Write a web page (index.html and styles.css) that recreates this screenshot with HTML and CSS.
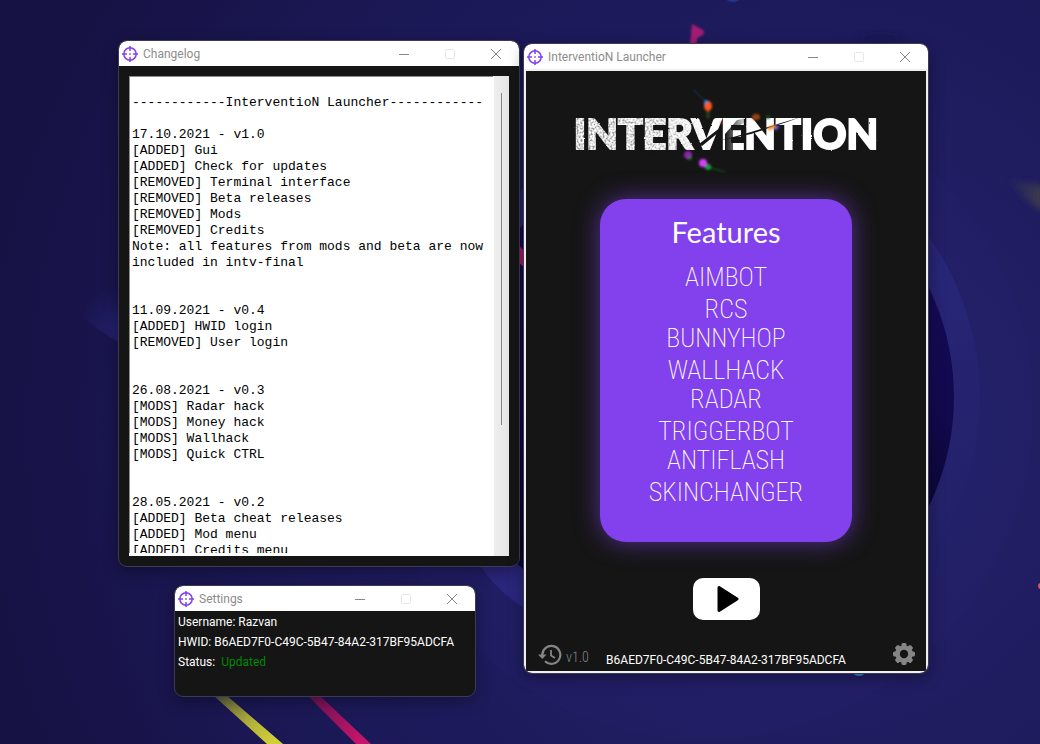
FILE: index.html
```html
<!DOCTYPE html>
<html lang="en">
<head>
<meta charset="utf-8">
<meta name="viewport" content="width=device-width, initial-scale=1">
<title>InterventioN Launcher</title>
<link rel="stylesheet" href="styles.css">
</head>
<body class="desktop">
<svg class="wallpaper" viewBox="0 0 1040 744" preserveAspectRatio="xMidYMid slice" aria-hidden="true">
  <defs>
    <radialGradient id="sky" gradientUnits="userSpaceOnUse" cx="800" cy="430" r="820">
      <stop offset="0" stop-color="#26236d"/><stop offset=".35" stop-color="#201d62"/><stop offset=".7" stop-color="#1b1856"/><stop offset="1" stop-color="#171244"/>
    </radialGradient>
    <linearGradient id="ring" x1="0" y1="0" x2=".3" y2="1">
      <stop offset="0" stop-color="#2b2880"/><stop offset=".55" stop-color="#272576"/><stop offset="1" stop-color="#26246e" stop-opacity="0"/>
    </linearGradient>
    <linearGradient id="core" x1="0" y1="0" x2="0" y2="1">
      <stop offset="0" stop-color="#150b58"/><stop offset=".5" stop-color="#120a50"/><stop offset=".8" stop-color="#0a052f"/><stop offset="1" stop-color="#130b50"/>
    </linearGradient>
    <radialGradient id="glow" gradientUnits="userSpaceOnUse" cx="120" cy="330" r="42">
      <stop offset="0" stop-color="#242270"/><stop offset="1" stop-color="#211f68" stop-opacity="0"/>
    </radialGradient>
    <linearGradient id="yellow" gradientUnits="userSpaceOnUse" x1="218" y1="697" x2="270" y2="744">
      <stop offset="0" stop-color="#5d6040"/><stop offset=".6" stop-color="#b3b13a"/><stop offset="1" stop-color="#d2cf3a"/>
    </linearGradient>
    <linearGradient id="pink" gradientUnits="userSpaceOnUse" x1="310" y1="697" x2="360" y2="744">
      <stop offset="0" stop-color="#6a1352"/><stop offset="1" stop-color="#c9146c"/>
    </linearGradient>
    <linearGradient id="olive">
      <stop offset="0" stop-color="#3a3850" stop-opacity="0"/><stop offset="1" stop-color="#3e3d4c"/>
    </linearGradient>
    <filter id="soft" x="-50%" y="-50%" width="200%" height="200%"><feGaussianBlur stdDeviation="1"/></filter>
    <filter id="softer" x="-50%" y="-50%" width="200%" height="200%"><feGaussianBlur stdDeviation="3"/></filter>
  </defs>
  <rect width="1040" height="744" fill="url(#sky)"/>
  <circle cx="704" cy="410" r="330" fill="#28267a" opacity=".12"/>
  <path d="M78 312Q98 332 122 344V280H78Z" fill="url(#glow)"/>
  <circle cx="704" cy="397" r="276" fill="url(#ring)"/>
  <path d="M480 566H524V608Q498 592 480 566Z" fill="#2a267c"/>
  <circle cx="704" cy="397" r="250" fill="url(#core)"/>
  <path d="M518 245L526 252V269L518 262Z" fill="#c2186c"/>
  <path d="M213 695H226L283 744H267Z" fill="url(#yellow)"/>
  <path d="M307 695H319L371 744H356Z" fill="url(#pink)"/>
  <path d="M692 24Q696 26 699 28Q704 29 704 33Q702 37 698 37L696 44H690Z" fill="#a31c72" filter="url(#soft)"/>
  <circle cx="859" cy="668" r="8" fill="#3191cc"/>
  <path d="M1005 178L1044 186V212L1026 200Z" fill="url(#olive)" filter="url(#softer)"/>
  <circle cx="1041" cy="586" r="3" fill="#dd5366"/>
  <circle cx="733" cy="-10" r="12" fill="#273da0" opacity=".7"/>
  <ellipse cx="880" cy="39" rx="20" ry="5" fill="#17134a" opacity=".5" filter="url(#softer)"/>
</svg>
<svg hidden>
  <symbol id="scope" viewBox="0 0 16 16">
    <g fill="none" stroke="#8241ed" stroke-width="1.5"><circle cx="8" cy="8" r="6.2"/><path d="M8 0V5M8 11V16M0 8H5M11 8H16M8 7.2V8.8M7.2 8H8.8"/></g>
  </symbol>
  <symbol id="minimize" viewBox="0 0 12 12"><path d="M1 6.5H11" stroke="#868686" fill="none"/></symbol>
  <symbol id="maximize" viewBox="0 0 12 12"><rect x="1.5" y="1.5" width="9" height="9" rx="1" stroke="#e6e6e6" fill="none"/></symbol>
  <symbol id="close" viewBox="0 0 12 12"><path d="M1 1L11 11M11 1L1 11" stroke="#868686" fill="none"/></symbol>
</svg>

<section class="window changelog" aria-labelledby="changelog-title">
  <header class="titlebar">
    <svg class="app-icon"><use href="#scope"/></svg><h2 class="title" id="changelog-title">Changelog</h2>
    <button class="control" aria-label="Minimize"><svg><use href="#minimize"/></svg></button>
    <button class="control" aria-label="Maximize" disabled><svg><use href="#maximize"/></svg></button>
    <button class="control" aria-label="Close"><svg><use href="#close"/></svg></button>
  </header>
  <div class="log">
    <textarea class="log-text" readonly aria-labelledby="changelog-title">

------------InterventioN Launcher------------

17.10.2021 - v1.0
[ADDED] Gui
[ADDED] Check for updates
[REMOVED] Terminal interface
[REMOVED] Beta releases
[REMOVED] Mods
[REMOVED] Credits
Note: all features from mods and beta are now
included in intv-final


11.09.2021 - v0.4
[ADDED] HWID login
[REMOVED] User login


26.08.2021 - v0.3
[MODS] Radar hack
[MODS] Money hack
[MODS] Wallhack
[MODS] Quick CTRL


28.05.2021 - v0.2
[ADDED] Beta cheat releases
[ADDED] Mod menu
[ADDED] Credits menu</textarea>
    <div class="scrollbar"><div class="thumb"></div></div>
  </div>
</section>

<section class="window settings" aria-labelledby="settings-title">
  <header class="titlebar">
    <svg class="app-icon"><use href="#scope"/></svg><h2 class="title" id="settings-title">Settings</h2>
    <button class="control" aria-label="Minimize"><svg><use href="#minimize"/></svg></button>
    <button class="control" aria-label="Maximize" disabled><svg><use href="#maximize"/></svg></button>
    <button class="control" aria-label="Close"><svg><use href="#close"/></svg></button>
  </header>
  <div class="account">
    <p>Username: Razvan</p>
    <p>HWID: B6AED7F0-C49C-5B47-84A2-317BF95ADCFA</p>
    <p>Status: <span class="status">Updated</span></p>
  </div>
</section>

<main class="window launcher" aria-labelledby="launcher-title">
  <header class="titlebar">
    <svg class="app-icon"><use href="#scope"/></svg><h1 class="title" id="launcher-title">InterventioN Launcher</h1>
    <button class="control" aria-label="Minimize"><svg><use href="#minimize"/></svg></button>
    <button class="control" aria-label="Maximize" disabled><svg><use href="#maximize"/></svg></button>
    <button class="control" aria-label="Close"><svg><use href="#close"/></svg></button>
  </header>
  <div class="stage">
    <svg class="logo" viewBox="0 0 330 100" role="img" aria-label="Intervention">
      <defs>
        <filter id="rough" x="0" y="0" width="100%" height="100%">
          <feTurbulence type="fractalNoise" baseFrequency=".4" numOctaves="1" seed="4" result="n"/>
          <feDisplacementMap in="SourceGraphic" in2="n" scale="2" xChannelSelector="R" yChannelSelector="G"/>
        </filter>
        <filter id="grit" x="0" y="0" width="100%" height="100%" color-interpolation-filters="sRGB">
          <feTurbulence type="fractalNoise" baseFrequency=".5" numOctaves="3" seed="9"/>
          <feColorMatrix values="0 0 0 0 .08  0 0 0 0 .08  0 0 0 0 .08  2 0 0 0 -.8"/>
        </filter>
        <linearGradient id="fade"><stop offset="0" stop-color="#bbb"/><stop offset=".7" stop-color="#888"/><stop offset="1" stop-color="#000"/></linearGradient>
        <mask id="left"><rect width="150" height="100" fill="url(#fade)"/></mask>
        <linearGradient id="shade"><stop offset="0" stop-color="#151515"/><stop offset="1" stop-color="#151515" stop-opacity="0"/></linearGradient>
        <filter id="spark" x="-50%" y="-50%" width="200%" height="200%"><feGaussianBlur stdDeviation="1.2"/></filter>
      </defs>
      <text class="logo-text" x="165" y="69" text-anchor="middle" filter="url(#rough)">INTERVENTION</text>
      <rect x="10" y="35" width="140" height="40" filter="url(#grit)" mask="url(#left)"/>
      <path d="M164 54L176 40L188 38L184 42L172 50V70L164 70Z" fill="url(#shade)"/>
      <path d="M138 64L160 47L158 52L141 66Z" fill="#151515"/>
      <path d="M158 61L190 52L240 37L226 42L190 54Z" fill="#151515"/>
      <g filter="url(#spark)">
        <path d="M133 10L145 22" stroke="#1b3e70"/>
        <ellipse cx="147" cy="26" rx="4" ry="5" fill="#ff5a1e"/><circle cx="145" cy="22" r="2" fill="#2f87e8"/>
        <ellipse cx="147" cy="35" rx="2" ry="4" fill="#233c1d"/>
        <ellipse cx="195" cy="37" rx="4" ry="3" fill="#9c4210"/><circle cx="207" cy="37" r="2" fill="#174d20"/>
        <path d="M207 49L215 46" stroke="#ff8b28" stroke-width="3"/><path d="M214 50L218 46" stroke="#4b58ff" stroke-width="2"/>
        <ellipse cx="127" cy="75" rx="4" ry="4" fill="#8a23ac"/><circle cx="129" cy="78" r="2" fill="#167128"/>
        <circle cx="142" cy="83" r="4" fill="#d83cff"/><circle cx="147" cy="87" r="3" fill="#1c9c3c"/>
        <path d="M150 88Q157 90 164 92" stroke="#123c17" stroke-width="2" fill="none"/><circle cx="160" cy="43" r="1" fill="#f32"/>
      </g>
    </svg>
    <section class="card" aria-labelledby="features">
      <h2 class="card-title" id="features">Features</h2>
      <ul class="features">
        <li>AIMBOT</li><li>RCS</li><li>BUNNYHOP</li><li>WALLHACK</li><li>RADAR</li><li>TRIGGERBOT</li><li>ANTIFLASH</li><li>SKINCHANGER</li>
      </ul>
    </section>
    <button class="play" aria-label="Play"><svg viewBox="0 0 22 28"><path d="M2 2.5L20 14L2 25.5Z" stroke="#000" stroke-width="3" stroke-linejoin="round"/></svg></button>
    <footer class="statusbar">
      <button class="history"><svg viewBox="0 0 24 22"><path d="M4.3 13V11A9 9 0 1 1 7 17.3" fill="none" stroke="#858585" stroke-width="2.2"/><path d="M0 10.5H8.5L4.3 15Z" fill="#858585"/><path d="M13 6V11.5L17 14" fill="none" stroke="#858585" stroke-width="1.8"/></svg><span>v1.0</span></button>
      <span class="hwid">B6AED7F0-C49C-5B47-84A2-317BF95ADCFA</span>
      <button class="gear" aria-label="Settings"><svg viewBox="-11 -11 22 22"><g fill="#858585"><rect id="tooth" x="-2.5" y="-11" width="5" height="22" rx="1.5"/><use href="#tooth" transform="rotate(45)"/><use href="#tooth" transform="rotate(90)"/><use href="#tooth" transform="rotate(135)"/><circle r="8.8"/></g><circle r="4.2" fill="#151515"/></svg></button>
    </footer>
  </div>
</main>
</body>
</html>
```
FILE: styles.css
```css
* { box-sizing: border-box; }

.desktop {
  margin: 0;
  min-height: 100vh;
  position: relative;
  overflow: hidden;
  background: #1b1856;
  font: 12px/20px "Roboto", "Noto Sans", sans-serif;
}

.wallpaper { position: absolute; inset: 0; width: 100%; height: 100%; }

h1, h2, p, ul { margin: 0; padding: 0; font-weight: 400; }
button { border: 0; padding: 0; background: none; font: inherit; }

.window {
  position: absolute;
  border-radius: 8px;
  overflow: hidden;
  background: #151515;
  outline: 1px solid #3c3a55;
  box-shadow: 0 4px 16px #0006;
}
.changelog { left: 119px; top: 41px; width: 400px; }
.settings { left: 175px; top: 586px; width: 300px; }
.launcher { left: 524px; top: 44px; width: 404px; background: #f0f0f0; }

.titlebar { display: flex; align-items: center; height: 25px; padding-left: 3px; background: #fff; }
.app-icon { width: 16px; height: 16px; }
.title { flex: 1; margin-left: 5px; font-size: 12px; line-height: 24px; color: #8c8c8c; }
.control { display: grid; place-items: center; width: 46px; height: 25px; }
.control svg { width: 12px; height: 12px; }

.log { display: flex; margin: 10px; background: #fff; }
.log-text {
  flex: 1;
  min-width: 0;
  height: 477px;
  margin: 0 1px 3px 0;
  padding: 2px 0 0 2px;
  border: solid #8c8c8c;
  border-width: 1px 0 0 1px;
  outline: 0;
  resize: none;
  overflow: hidden;
  white-space: pre;
  background: #fff;
  color: #000;
  font: 13px/16px "Liberation Mono", monospace;
}
.scrollbar { width: 15px; padding: 17px 7px; background: linear-gradient(90deg, #eee, #e6e6e6); }
.thumb { height: 332px; background: #868686; }

.account { padding: 1px 3px 24px; color: #fff; }
.status { margin-left: 3px; color: #008a00; }

.stage {
  display: flex;
  flex-direction: column;
  align-items: center;
  margin: 2px;
  padding: 9px 9px 1px;
  background: #151515;
}
.logo { width: 330px; height: 100px; }
.logo-text { font: 900 41px "Lato", sans-serif; fill: #fff; stroke: #fff; stroke-width: 2px; }

.card {
  width: 252px;
  margin-top: 19px;
  padding: 15px 16px 35px;
  border-radius: 26px;
  background: #8241ed;
  box-shadow: 0 0 24px #8241ed99;
  color: #fff;
  text-align: center;
}
.card-title { font: 400 29px/36px "Lato", sans-serif; }
.features { margin-top: 13px; list-style: none; font: 200 26px/29px "Roboto Condensed", "Open Sans Condensed Light", sans-serif; }
.features li:nth-child(odd) { margin-bottom: 3px; }

.play { display: grid; place-items: center; width: 67px; height: 42px; margin-top: 36px; padding-left: 3px; border-radius: 10px; background: #fff; }
.play svg { width: 22px; height: 28px; }

.statusbar { display: grid; grid-template-columns: 1fr auto 1fr; width: 100%; margin-top: 20px; color: #fff; }
.history { display: flex; align-items: center; gap: 4px; padding-left: 3px; color: #858585; font: 300 14px/20px "Roboto Condensed", "Open Sans Condensed Light", sans-serif; }
.history svg { width: 24px; height: 22px; }
.history span { padding-top: 4px; }
.hwid { padding-top: 10px; }
.gear { justify-self: end; align-self: start; width: 22px; height: 22px; margin: 3px 2px 0 0; }
.gear svg { display: block; }
```
